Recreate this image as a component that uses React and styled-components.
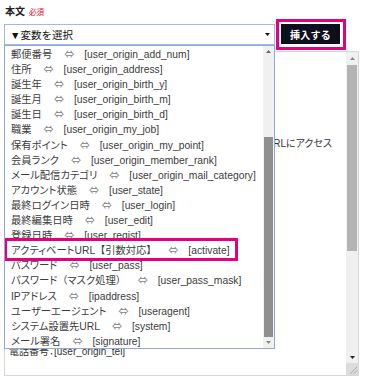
import React from "react";
import styled, { createGlobalStyle } from "styled-components";

const GlobalStyle = createGlobalStyle`
  html, body { margin: 0; padding: 0; background: #fff; }
  body { font-family: "Liberation Sans", "Noto Sans CJK JP", sans-serif; }
`;

const Page = styled.div`
  width: 366px;
  height: 385px;
  box-sizing: border-box;
  padding: 5px 7px 0 4px;
  display: flex;
  flex-direction: column;
  font-family: "Liberation Sans", "Noto Sans CJK JP", sans-serif;
`;

const FieldLabel = styled.div`
  display: flex;
  align-items: baseline;
  gap: 4px;
  height: 14px;
  line-height: 14px;
  padding-left: 1px;
  font-size: 10px;
  font-weight: bold;
  color: #222;
`;

const Required = styled.span`
  color: #e60012;
  font-size: 7.5px;
  font-weight: normal;
`;

const Toolbar = styled.div`
  display: flex;
  align-items: center;
  gap: 1px;
`;

const SelectBox = styled.div`
  position: relative;
  width: 271px;
  height: 21px;
  box-sizing: border-box;
  border: 1px solid #a4b8e6;
  background: #fff;
  display: flex;
  align-items: center;
  justify-content: space-between;
  padding: 0 4px 0 5px;
  font-size: 10.5px;
  color: #111;
`;

const Caret = styled.svg`
  width: 5px;
  height: 3px;
  display: block;
`;

const Frame = styled.div`
  border: 3px solid #e4007f;
  padding: 2px 3px 3px 2px;
  display: flex;
`;

const InsertButton = styled.button`
  width: 59px;
  height: 20px;
  background: #0d101c;
  color: #fff;
  border: 0;
  padding: 0;
  font-family: inherit;
  font-size: 10px;
  font-weight: bold;
  letter-spacing: 0.3px;
`;

const Dropdown = styled.div`
  position: absolute;
  top: calc(100% + 1px);
  left: -1px;
  width: 271px;
  height: 304px;
  box-sizing: border-box;
  border: 1px solid #8ea8da;
  background: #fff;
  display: flex;
  z-index: 2;
`;

const OptionList = styled.div`
  flex: 1;
  min-width: 0;
  padding-left: 6px;
  overflow: hidden;
`;

const Option = styled.div`
  position: relative;
  height: 15.1px;
  line-height: 15.1px;
  font-size: 10.3px;
  color: #3c3c3c;
  white-space: nowrap;
  font-feature-settings: "palt";
`;

const Paren = styled.span`
  font-size: 10px;
  font-feature-settings: normal;
`;

const Arrow = styled.span`
  margin: 0 10px 0 12px;
  font-size: 10px;
  color: #808080;
  font-family: "Noto Sans CJK JP", sans-serif;
  font-feature-settings: normal;
`;

const Highlight = styled.span`
  position: absolute;
  left: -7px;
  top: -4px;
  width: 234px;
  height: 23px;
  box-sizing: border-box;
  border: 3px solid #e4007f;
  pointer-events: none;
`;

const Scrollbar = styled.div`
  width: ${(p) => p.$width}px;
  flex: 0 0 ${(p) => p.$width}px;
  background: #f0f0f0;
  display: flex;
  flex-direction: column;
`;

const ScrollArrow = styled.div`
  height: ${(p) => p.$size}px;
  flex: 0 0 ${(p) => p.$size}px;
  display: flex;
  align-items: center;
  justify-content: center;
`;

const Track = styled.div`
  flex: 1;
  display: flex;
  flex-direction: column;
  justify-content: ${(p) => (p.$end ? "flex-end" : "flex-start")};
  align-items: center;
`;

const Thumb = styled.div`
  width: ${(p) => p.$w}px;
  height: ${(p) => p.$h}px;
  background: ${(p) => p.$color};
`;

const Grip = styled.svg`
  width: 12px;
  height: 12px;
  flex: 0 0 12px;
  display: block;
  background: #dcdcdc;
`;

const TextArea = styled.div`
  margin-top: 1px;
  width: 355px;
  height: 325px;
  box-sizing: border-box;
  border: 1px solid #d6d6d6;
  display: flex;
  background: #fff;
`;

const TextContent = styled.div`
  flex: 1;
  min-width: 0;
  padding: 4px 4px;
  font-size: 10px;
  line-height: 16px;
  color: #333;
  white-space: pre;
  overflow: hidden;
  font-feature-settings: "palt";
`;

const Tri = ({ up, color }) => (
  <Caret viewBox="0 0 5 3">
    <polygon points={up ? "0,3 5,3 2.5,0" : "0,0 5,0 2.5,3"} fill={color} />
  </Caret>
);

const renderLabel = (label) =>
  label.split(/([（）【】])/).map((part, i) =>
    /^[（）【】]$/.test(part) ? <Paren key={i}>{part}</Paren> : part
  );

const options = [
  ["郵便番号", "[user_origin_add_num]"],
  ["住所", "[user_origin_address]"],
  ["誕生年", "[user_origin_birth_y]"],
  ["誕生月", "[user_origin_birth_m]"],
  ["誕生日", "[user_origin_birth_d]"],
  ["職業", "[user_origin_my_job]"],
  ["保有ポイント", "[user_origin_my_point]"],
  ["会員ランク", "[user_origin_member_rank]"],
  ["メール配信カテゴリ", "[user_origin_mail_category]"],
  ["アカウント状態", "[user_state]"],
  ["最終ログイン日時", "[user_login]"],
  ["最終編集日時", "[user_edit]"],
  ["登録日時", "[user_regist]"],
  ["アクティベートURL【引数対応】", "[activate]", true],
  ["パスワード", "[user_pass]"],
  ["パスワード（マスク処理）", "[user_pass_mask]"],
  ["IPアドレス", "[ipaddress]"],
  ["ユーザーエージェント", "[useragent]"],
  ["システム設置先URL", "[system]"],
  ["メール署名", "[signature]"],
];

const bodyText = [
  "[user_origin_name]様",
  "",
  "この度はご登録いただき誠にありがとうございます。",
  "",
  "本登録を完了するには、以下の手順を行ってください。",
  "このたびはご登録いただき誠にありがとうございます。下記   URLにアクセス",
  "してください。",
  "[activate]",
  "",
  "■登録内容",
  "お名前：[user_origin_name]",
  "メールアドレス：[user_origin_mail]",
  "郵便番号：[user_origin_add_num]",
  "住所：[user_origin_address]",
  "",
  "",
  "",
  "",
  "電話番号：[user_origin_tel]",
].join("\n");

export default function App() {
  return (
    <>
      <GlobalStyle />
      <Page>
        <FieldLabel>
          本文<Required>必須</Required>
        </FieldLabel>
        <Toolbar>
          <SelectBox>
            <span>▼変数を選択</span>
            <Tri color="#111" />
            <Dropdown>
              <OptionList>
                {options.map(([label, code, hl]) => (
                  <Option key={code}>
                    {renderLabel(label)}
                    <Arrow>⇔</Arrow>
                    {code}
                    {hl && <Highlight />}
                  </Option>
                ))}
              </OptionList>
              <Scrollbar $width={11}>
                <ScrollArrow $size={11}>
                  <Tri up color="#666" />
                </ScrollArrow>
                <Track $end>
                  <Thumb $w={9} $h={200} $color="#8f8f8f" />
                </Track>
                <ScrollArrow $size={11}>
                  <Tri color="#888" />
                </ScrollArrow>
              </Scrollbar>
            </Dropdown>
          </SelectBox>
          <Frame>
            <InsertButton>挿入する</InsertButton>
          </Frame>
        </Toolbar>
        <TextArea>
          <TextContent>{bodyText}</TextContent>
          <Scrollbar $width={12}>
            <ScrollArrow $size={13}>
              <Tri up color="#888" />
            </ScrollArrow>
            <Track>
              <Thumb $w={10} $h={186} $color="#b4b4b4" />
            </Track>
            <ScrollArrow $size={12}>
              <Tri color="#222" />
            </ScrollArrow>
            <Grip viewBox="0 0 12 12">
              <line x1="11" y1="4" x2="4" y2="11" stroke="#9a9a9a" strokeWidth="0.8" />
              <line x1="11" y1="7.5" x2="7.5" y2="11" stroke="#9a9a9a" strokeWidth="0.8" />
            </Grip>
          </Scrollbar>
        </TextArea>
      </Page>
    </>
  );
}
